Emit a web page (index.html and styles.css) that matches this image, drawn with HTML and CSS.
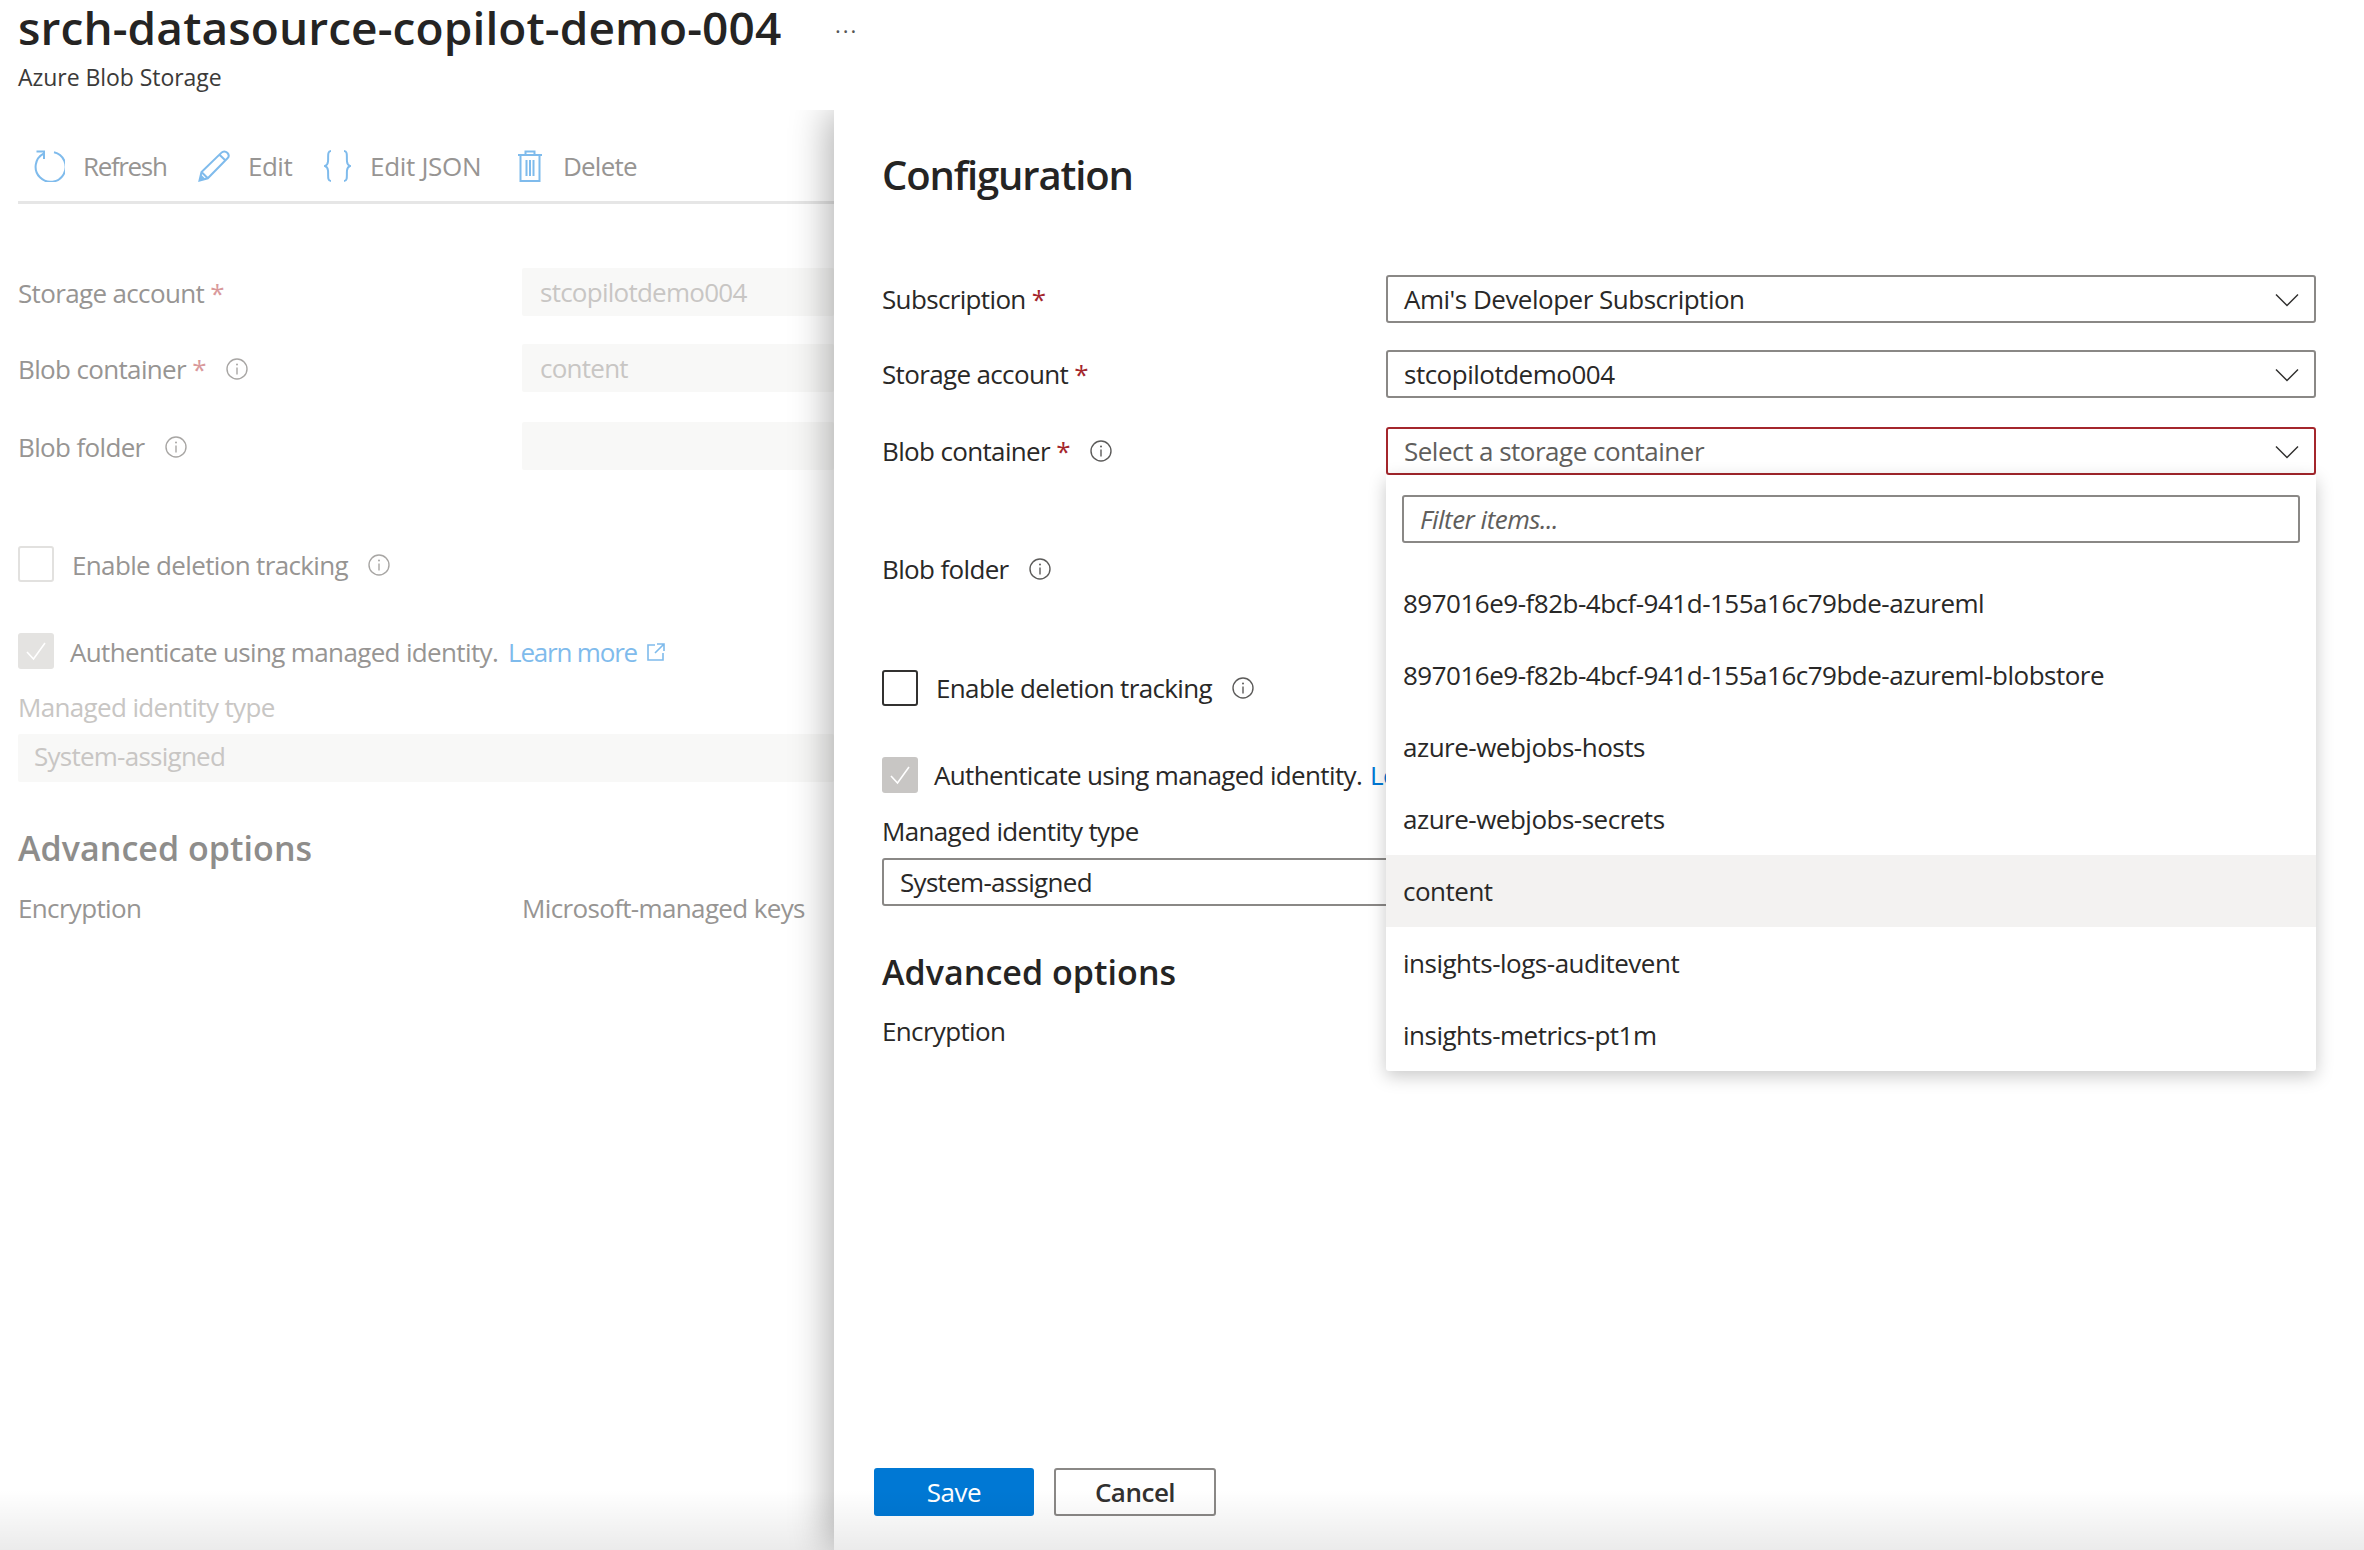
FILE: index.html
```html
<!DOCTYPE html>
<html lang="en">
<head>
<meta charset="utf-8">
<title>srch-datasource-copilot-demo-004</title>
<link rel="stylesheet" href="styles.css">
</head>
<body>
<svg class="defs" width="0" height="0" aria-hidden="true">
  <symbol id="info" viewBox="0 0 22 22"><circle cx="11" cy="11" r="10" fill="none" stroke="currentColor" stroke-width="1.4"/><circle cx="11" cy="6.6" r="1" fill="currentColor"/><path d="M11 9.6V16.4" fill="none" stroke="currentColor" stroke-width="1.4"/></symbol>
  <symbol id="chev" viewBox="0 0 24 14"><path d="M1 1.5 12 12.500 23 1.500" fill="none" stroke="currentColor" stroke-width="1.5"/></symbol>
  <symbol id="check" viewBox="0 0 36 36"><path d="M9 19 15.500 26 27 10" fill="none" stroke="#fff" stroke-width="1.6"/></symbol>
  <symbol id="ext" viewBox="0 0 18 18"><path d="M8 2H1V17H16V10M10 1H17V8M17 1 8 10" fill="none" stroke="currentColor" stroke-width="1.6"/></symbol>
</svg>

<main class="blade">
  <header class="head">
    <div class="title-row">
      <h1 class="title">srch-datasource-copilot-demo-004</h1>
      <span class="more">···</span>
    </div>
    <p class="subtitle">Azure Blob Storage</p>
  </header>

  <nav class="toolbar">
    <span class="tool tool-refresh"><svg class="tool-ico" width="32" height="32" viewBox="0 0 32 32"><path d="M10.500 3.600A15 15 0 1 0 21 2.200" fill="none" stroke="currentColor" stroke-width="2"/><path d="M3.500 1.500H11V9" fill="none" stroke="currentColor" stroke-width="2"/></svg>Refresh</span>
    <span class="tool tool-edit"><svg class="tool-ico" width="32" height="32" viewBox="0 0 32 32"><path d="M1.500 30.500 3.500 22 23.500 2.600C25 1 27.500 1 29.300 2.700 31 4.500 31 6.700 29.500 8.200L9.800 28.300ZM3.500 22 9.800 28.300M21.500 4.800 27.500 10.500" fill="none" stroke="currentColor" stroke-width="2"/><path d="M1.500 30.500 3 24.500 7.500 29Z" fill="currentColor"/></svg>Edit</span>
    <span class="tool tool-json"><svg class="tool-ico" width="27" height="32" viewBox="0 0 27 32"><path d="M7 1C3 1 4.500 7 4 11.500 3.700 14.500 2.500 15.500 1 16 2.500 16.500 3.700 17.500 4 20.500 4.500 25 3 31 7 31M20 1C24 1 22.500 7 23 11.500 23.300 14.500 24.500 15.500 26 16 24.500 16.500 23.300 17.500 23 20.500 22.500 25 24 31 20 31" fill="none" stroke="currentColor" stroke-width="2"/></svg>Edit JSON</span>
    <span class="tool tool-delete"><svg class="tool-ico" width="26" height="32" viewBox="0 0 26 32"><path d="M1 5H25M8.500 5V1.500H17.500V5M3.500 5V31H22.500V5M9.500 10V26M13 10V26M16.500 10V26" fill="none" stroke="currentColor" stroke-width="2"/></svg>Delete</span>
  </nav>

  <section class="old-form">
    <div class="old-row">
      <span class="old-label">Storage account <em class="req">*</em></span>
      <span class="old-input">stcopilotdemo004</span>
    </div>
    <div class="old-row gap-28">
      <span class="old-label">Blob container <em class="req">*</em><svg class="info"><use href="#info"/></svg></span>
      <span class="old-input">content</span>
    </div>
    <div class="old-row gap-30">
      <span class="old-label">Blob folder<svg class="info"><use href="#info"/></svg></span>
      <span class="old-input"></span>
    </div>
    <div class="old-check gap-76">
      <span class="box old-box"></span>
      <span class="old-label check-text-a">Enable deletion tracking<svg class="info"><use href="#info"/></svg></span>
    </div>
    <div class="old-check gap-51">
      <span class="box old-box-on"><svg width="36" height="36"><use href="#check"/></svg></span>
      <span class="old-label check-text-b">Authenticate using managed identity.<a class="old-link">Learn more<svg class="ext" width="18" height="18"><use href="#ext"/></svg></a></span>
    </div>
    <p class="old-mi">Managed identity type</p>
    <div class="old-input old-wide">System-assigned</div>
    <h3 class="old-adv">Advanced options</h3>
    <div class="old-enc">
      <span>Encryption</span>
      <span>Microsoft-managed keys</span>
    </div>
  </section>
</main>

<div class="panel-clip">
  <aside class="panel">
    <h2 class="panel-title">Configuration</h2>

    <div class="row row-first">
      <span class="label">Subscription <em class="req-on">*</em></span>
      <div class="select"><span>Ami's Developer Subscription</span><svg class="chev"><use href="#chev"/></svg></div>
    </div>
    <div class="row gap-27">
      <span class="label">Storage account <em class="req-on">*</em></span>
      <div class="select"><span>stcopilotdemo004</span><svg class="chev"><use href="#chev"/></svg></div>
    </div>
    <div class="row gap-29">
      <span class="label">Blob container <em class="req-on">*</em><svg class="info on"><use href="#info"/></svg></span>
      <div class="select select-error">
        <span class="placeholder">Select a storage container</span><svg class="chev"><use href="#chev"/></svg>
        <div class="dropdown">
          <div class="filter">Filter items...</div>
          <ul class="items">
            <li class="item">897016e9-f82b-4bcf-941d-155a16c79bde-azureml</li>
            <li class="item">897016e9-f82b-4bcf-941d-155a16c79bde-azureml-blobstore</li>
            <li class="item">azure-webjobs-hosts</li>
            <li class="item">azure-webjobs-secrets</li>
            <li class="item item-hover">content</li>
            <li class="item">insights-logs-auditevent</li>
            <li class="item">insights-metrics-pt1m</li>
          </ul>
        </div>
      </div>
    </div>
    <div class="row gap-70">
      <span class="label">Blob folder<svg class="info on"><use href="#info"/></svg></span>
    </div>

    <div class="check gap-77">
      <span class="box box-on"></span>
      <span class="label check-label-a">Enable deletion tracking<svg class="info on"><use href="#info"/></svg></span>
    </div>
    <div class="check gap-51">
      <span class="box box-checked"><svg width="36" height="36"><use href="#check"/></svg></span>
      <span class="label check-label-b">Authenticate using managed identity.<a class="link">Learn more</a></span>
    </div>

    <p class="mi-label">Managed identity type</p>
    <div class="select mi-select"><span>System-assigned</span></div>
    <h3 class="adv">Advanced options</h3>
    <p class="enc">Encryption</p>

    <footer class="actions">
      <button class="btn btn-primary">Save</button>
      <button class="btn btn-default">Cancel</button>
    </footer>
  </aside>
</div>
<div class="bottom-fade"></div>
</body>
</html>
```

FILE: styles.css
```css
* { box-sizing: border-box; }
html, body { margin: 0; height: 100%; }
body {
  position: relative;
  height: 1550px;
  overflow: hidden;
  background: #fff;
  color: #292827;
  font-family: "Open Sans", "Noto Sans", sans-serif;
  font-size: 26px;
  font-stretch: 88%;
  letter-spacing: -0.5px;
}
.defs { position: absolute; }
p, h1, h2, h3, ul { margin: 0; padding: 0; }
em { font-style: normal; }

/* left blade */
.blade { padding-left: 18px; width: 834px; }
.head { height: 110px; }
.title-row { display: flex; height: 54px; width: 860px; align-items: center; }
.title { font-size: 46px; line-height: 54px; font-weight: 600; letter-spacing: 0.1px; color: #252423; width: 817px; flex: none; white-space: nowrap; }
.more { color: #555; font-size: 22px; letter-spacing: 2px; line-height: 1; margin-top: 6px; flex: none; }
.subtitle { font-size: 23px; line-height: 32px; margin-top: 7px; color: #3b3a39; letter-spacing: -0.05px; }

.toolbar { display: flex; align-items: center; height: 94px; border-bottom: 3px solid #e6e6e6; color: #979593; padding-left: 15px; }
.tool { display: flex; align-items: center; height: 32px; line-height: 32px; margin-top: 21px; white-space: nowrap; }
.tool-ico { color: #7fbbec; margin-right: 18px; flex: none; }
.tool-refresh { width: 165px; letter-spacing: -1.35px; }
.tool-edit { width: 126px; }
.tool-json { width: 193px; letter-spacing: -0.3px; }
.tool-delete { width: 140px; letter-spacing: -0.8px; }
.tool-delete .tool-ico { margin-right: 20px; }
.tool-json .tool-ico { margin-right: 19px; }

/* left form (dimmed) */
.old-form { padding-top: 64px; color: #979593; }
.old-row { display: grid; grid-template-columns: 504px 1fr; height: 48px; align-items: center; }
.old-label { display: flex; align-items: center; white-space: pre; letter-spacing: -0.65px; padding-top: 2px; }
.req { color: #d9999b; }
.old-input { display: block; height: 48px; line-height: 48px; background: #f8f8f7; padding-left: 18px; color: #c8c6c4; border-radius: 2px; letter-spacing: -0.75px; }
.info { width: 22px; height: 22px; margin-left: 20px; color: #a8a6a4; flex: none; }
.info.on { color: #5c5b5a; }
.gap-27 { margin-top: 27px; }
.gap-28 { margin-top: 28px; }
.gap-29 { margin-top: 29px; }
.gap-30 { margin-top: 30px; }
.gap-51 { margin-top: 51px; }
.gap-70 { margin-top: 70px; }
.gap-76 { margin-top: 76px; }
.gap-77 { margin-top: 77px; }
.old-check, .check { display: flex; align-items: center; height: 36px; flex: none; }
.box { display: block; width: 36px; height: 36px; border-radius: 3px; flex: none; }
.old-box { border: 2px solid #e2e1df; }
.old-box-on { background: #e4e3e1; }
.box-on { border: 2px solid #323130; }
.box-checked { background: #c8c6c4; }
.check-text-a { margin-left: 18px; }
.check-text-b { margin-left: 16px; }
.old-link { color: #7fbbec; margin-left: 10px; display: flex; align-items: center; letter-spacing: -1.2px; }
.ext { margin-left: 10px; color: #7fbbec; }
.old-mi { color: #c8c6c4; line-height: 36px; margin-top: 20px; letter-spacing: -0.65px; }
.old-wide { margin-top: 9px; padding-left: 16px; line-height: 45px; }
.old-adv { font-size: 34px; font-weight: 600; line-height: 50px; color: #8e8d8b; margin-top: 41px; letter-spacing: 0.05px; }
.old-enc { display: grid; grid-template-columns: 504px 1fr; line-height: 36px; margin-top: 17px; letter-spacing: -0.65px; }

/* right panel */
.panel-clip { position: absolute; top: 110px; left: 0; right: 0; bottom: 0; overflow: hidden; pointer-events: none; }
.panel { position: absolute; top: 0; bottom: 0; left: 834px; right: 0; background: #fff; padding: 35px 48px 34px; display: flex; flex-direction: column; box-shadow: -6px 0 36px rgba(0, 0, 0, 0.3); }
.panel-title { font-size: 40px; font-weight: 600; line-height: 60px; height: 60px; letter-spacing: -1.15px; color: #252423; flex: none; }
.row { display: grid; grid-template-columns: 504px 1fr; height: 48px; align-items: center; flex: none; }
.row-first { margin-top: 70px; }
.label { display: flex; align-items: center; white-space: pre; letter-spacing: -0.65px; }
.req-on { color: #a4262c; }
.select { position: relative; display: flex; align-items: center; justify-content: space-between; height: 48px; border: 2px solid #8a8886; border-radius: 3px; padding: 0 16px; background: #fff; }
.select-error { border-color: #a4262c; }
.placeholder { color: #605e5c; }
.chev { width: 24px; height: 14px; color: #323130; margin-top: 1px; margin-right: -1px; }
.dropdown { position: absolute; top: 46px; left: -2px; right: -2px; background: #fff; border-radius: 0 0 3px 3px; box-shadow: 0 5px 18px rgba(0, 0, 0, 0.22); padding-top: 20px; z-index: 2; }
.filter { height: 48px; line-height: 44px; margin: 0 16px; border: 2px solid #8a8886; border-radius: 3px; padding-left: 16px; font-style: italic; color: #605e5c; }
.items { list-style: none; margin-top: 24px; }
.item { height: 72px; line-height: 72px; padding-left: 17px; }
.item-hover { background: #f3f2f1; }
.check-label-a { margin-left: 18px; }
.check-label-b { margin-left: 16px; }
.link { color: #0078d4; margin-left: 8px; }
.mi-label { line-height: 36px; margin-top: 20px; letter-spacing: -0.65px; flex: none; }
.mi-select { margin-top: 9px; flex: none; width: 700px; letter-spacing: -0.7px; line-height: 42px; }
.adv { font-size: 34px; font-weight: 600; line-height: 50px; margin-top: 41px; letter-spacing: 0.05px; color: #252423; flex: none; }
.enc { line-height: 36px; margin-top: 16px; letter-spacing: -0.65px; flex: none; }
.actions { margin-top: auto; display: flex; gap: 20px; margin-left: -8px; flex: none; }
.btn { height: 48px; font: inherit; letter-spacing: inherit; border-radius: 3px; padding: 0; }
.btn-primary { width: 160px; background: #0078d4; border: none; color: #fff; }
.btn-default { width: 162px; background: #fff; border: 2px solid #8a8886; color: #323130; font-weight: 600; }
.bottom-fade { position: absolute; left: 0; right: 0; bottom: 0; height: 60px; background: linear-gradient(180deg, rgba(0,0,0,0), rgba(0,0,0,0.08)); pointer-events: none; }
```
